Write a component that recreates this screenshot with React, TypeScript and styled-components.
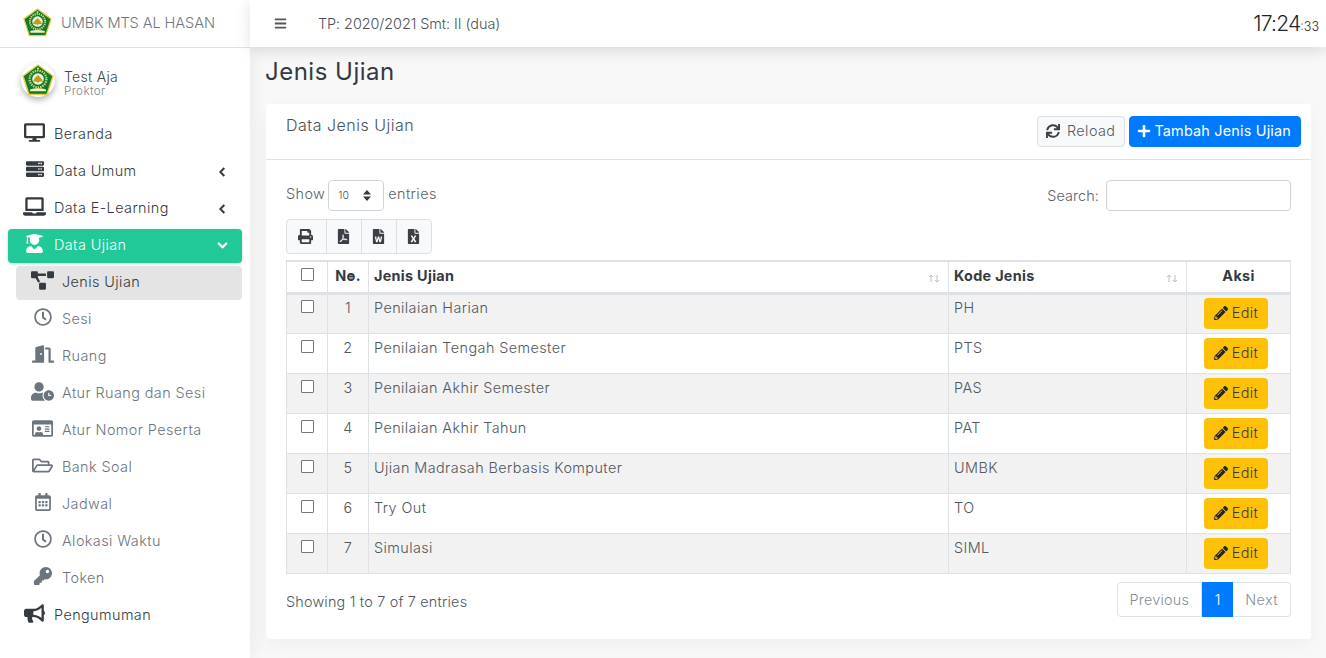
import styled, { createGlobalStyle } from "styled-components";
import type { ReactNode } from "react";
import {
  FaBars,
  FaBullhorn,
  FaChevronDown,
  FaChevronLeft,
  FaDesktop,
  FaDoorOpen,
  FaFilePdf,
  FaFileWord,
  FaFileExcel,
  FaKey,
  FaLaptop,
  FaPencilAlt,
  FaPlus,
  FaPrint,
  FaProjectDiagram,
  FaRegCalendarAlt,
  FaRegClock,
  FaRegFolderOpen,
  FaRegIdCard,
  FaServer,
  FaSync,
  FaUserClock,
  FaUserGraduate,
} from "react-icons/fa";

const GlobalStyle = createGlobalStyle`
  html, body {
    margin: 0;
    padding: 0;
    height: 100%;
    overflow: hidden;
    background: #f8f8f8;
    font-family: "Inter", "Liberation Sans", sans-serif;
    font-weight: 300;
    font-size: 14.4px;
    letter-spacing: 0.42px;
    color: #343a40;
  }
  * { box-sizing: border-box; }
`;

const Layout = styled.div`
  display: grid;
  grid-template-columns: 250px 1fr;
  height: 658px;
  overflow: hidden;
`;

const Sidebar = styled.aside`
  position: relative;
  background: #fff;
  height: 658px;
  display: flex;
  flex-direction: column;
  box-shadow: 4px 0 14px rgba(0, 0, 0, 0.05);
`;

const Brand = styled.div`
  height: 48px;
  border-bottom: 1px solid #dee2e6;
  display: flex;
  align-items: center;
  padding-left: 23px;
  gap: 9px;
  color: #6f777e;
  font-size: 14.6px;
  letter-spacing: -0.1px;
  padding-bottom: 2px;
`;

const UserPanel = styled.div`
  display: flex;
  align-items: center;
  gap: 9px;
  padding: 0 0 4px 21px;
  height: 68px;
`;

const Avatar = styled.div`
  width: 34px;
  height: 34px;
  border-radius: 50%;
  background: #fff;
  display: flex;
  align-items: center;
  justify-content: center;
  box-shadow: 0 3px 6px rgba(0, 0, 0, 0.3);
`;

const UserText = styled.div`
  margin-top: 6px;
`;

const UserName = styled.div`
  font-size: 14px;
  line-height: 17px;
  letter-spacing: 0.3px;
  color: #3f464c;
`;

const UserRole = styled.div`
  font-size: 11.6px;
  line-height: 13px;
  color: #7d858c;
`;

const Menu = styled.nav`
  display: flex;
  flex-direction: column;
  padding: 0 8px;
  margin-top: 2px;
`;

const MenuItem = styled.div<{ $active?: boolean; $current?: boolean; $sub?: boolean }>`
  height: 34px;
  margin-bottom: 3px;
  margin-left: ${(p) => (p.$sub ? "8px" : "0")};
  padding: 0 15px 4px;
  display: flex;
  align-items: center;
  border-radius: 4px;
  color: ${(p) => (p.$active ? "#fff" : p.$sub && !p.$current ? "#6c757d" : "#343a40")};
  background: ${(p) => (p.$active ? "#20c997" : p.$current ? "#e4e4e4" : "transparent")};
  box-shadow: ${(p) => (p.$active ? "0 1px 3px rgba(0,0,0,.2)" : "none")};
`;

const MenuIcon = styled.span`
  width: 23px;
  margin-right: 8px;
  display: flex;
  justify-content: center;
  margin-top: -2px;
`;

const MenuLabel = styled.span`
  flex: 1;
`;

const Caret = styled.span`
  display: flex;
  justify-content: center;
  width: 12px;
  margin-right: -1px;
  margin-top: 3px;
  svg {
    stroke: currentColor;
    stroke-width: 30px;
  }
`;

const Content = styled.div`
  min-width: 0;
  display: flex;
  flex-direction: column;
`;

const Topbar = styled.header`
  height: 47px;
  background: #fff;
  display: flex;
  align-items: center;
  padding: 0 7px 0 24px;
  box-shadow: 0 4px 14px rgba(0, 0, 0, 0.12);
  position: relative;
`;

const MenuToggle = styled.span`
  display: flex;
  font-size: 13px;
  color: #555;
  margin-right: 31px;
`;

const YearLabel = styled.span`
  flex: 1;
  font-size: 14.4px;
  letter-spacing: -0.05px;
  color: #4b5258;
`;

const Clock = styled.div`
  font-size: 21px;
  letter-spacing: -0.8px;
  color: #212529;
  small {
    font-size: 12.5px;
    letter-spacing: 0;
  }
`;

const Main = styled.main`
  padding: 8px 15px 0 15px;
`;

const PageTitle = styled.h1`
  margin: 0 0 16px;
  font-size: 24px;
  line-height: 33px;
  font-weight: 400;
  letter-spacing: 0.5px;
  color: #343a40;
`;

const Card = styled.section`
  background: #fff;
  margin-left: 1px;
  height: 535px;
  border-radius: 4px;
  box-shadow: 0 6px 20px rgba(0, 0, 0, 0.04);
`;

const CardHeader = styled.div`
  height: 56px;
  border-bottom: 1px solid #dee2e6;
  display: flex;
  justify-content: space-between;
  padding: 12px 10px 0 20px;
`;

const CardTitle = styled.div`
  font-size: 16px;
  letter-spacing: 0.5px;
  line-height: 19px;
  color: #4b5258;
`;

const HeaderActions = styled.div`
  display: flex;
  gap: 4px;
`;

const Button = styled.button<{ $primary?: boolean }>`
  height: 31px;
  border-radius: 4px;
  border: 1px solid ${(p) => (p.$primary ? "#007bff" : "#dcdfe3")};
  background: ${(p) => (p.$primary ? "#007bff" : "#f8f9fa")};
  color: ${(p) => (p.$primary ? "#fff" : "#555c63")};
  font: inherit;
  font-weight: ${(p) => (p.$primary ? 400 : 300)};
  letter-spacing: ${(p) => (p.$primary ? "0.2px" : "0.42px")};
  display: flex;
  align-items: center;
  padding: 0 9px 2px ${(p) => (p.$primary ? "7px" : "8px")};
  gap: ${(p) => (p.$primary ? "3px" : "7px")};
  svg {
    font-size: 14px;
    color: ${(p) => (p.$primary ? "#fff" : "#3a4046")};
  }
`;

const CardBody = styled.div`
  padding: 20px 20px 0 20px;
`;

const Controls = styled.div`
  display: flex;
  justify-content: space-between;
  align-items: flex-start;
`;

const LengthControl = styled.label`
  display: flex;
  align-items: center;
  gap: 4px;
  height: 27px;
  color: #5b6268;
`;

const SelectBox = styled.span`
  width: 56px;
  height: 31px;
  align-self: flex-start;
  margin-left: -1px;
  border: 1px solid #ced4da;
  border-radius: 4px;
  display: flex;
  align-items: center;
  justify-content: space-between;
  padding: 0 12px 0 9px;
  font-size: 10.5px;
  letter-spacing: 0;
  color: #495057;
`;

const SelectArrows = styled.svg`
  width: 8px;
  height: 11px;
  fill: #343a40;
`;

const SearchControl = styled.label`
  display: flex;
  align-items: center;
  gap: 7px;
  letter-spacing: 0.1px;
  color: #5b6268;
`;

const SearchInput = styled.input`
  width: 185px;
  height: 31px;
  border: 1px solid #ced4da;
  border-radius: 4px;
  background: #fff;
`;

const ExportGroup = styled.div`
  display: flex;
  margin: 12px 0 6px;
  height: 35px;
`;

const ExportButton = styled.button`
  width: 36px;
  height: 35px;
  margin-left: -1px;
  background: #f8f9fa;
  border: 1px solid #dcdfe3;
  color: #3a4046;
  font-size: 15px;
  display: flex;
  align-items: center;
  justify-content: center;
  padding: 0 2px 0 0;
  &:first-child {
    margin-left: 0;
    border-radius: 4px 0 0 4px;
    width: 41px;
  }
  &:last-child {
    border-radius: 0 4px 4px 0;
  }
`;

const Table = styled.table`
  width: 1004px;
  border-collapse: collapse;
  table-layout: fixed;
  tbody tr:first-child td {
    padding-top: 3px;
  }
`;

const HeadCell = styled.th<{ $center?: boolean }>`
  height: 32px;
  position: relative;
  border: 1px solid #dee2e6;
  border-top-width: 2px;
  border-bottom-width: 3px;
  padding: 0 5px 2px;
  font-weight: 700;
  font-size: 14.4px;
  letter-spacing: 0.3px;
  color: #343a40;
  text-align: ${(p) => (p.$center ? "center" : "left")};
`;

const Row = styled.tr<{ $odd?: boolean }>`
  background: ${(p) => (p.$odd ? "#f2f2f2" : "#fff")};
`;

const Cell = styled.td<{ $center?: boolean }>`
  height: 40px;
  border: 1px solid #dee2e6;
  padding: 4px 5px 0;
  vertical-align: top;
  line-height: 20px;
  color: #50575d;
  text-align: ${(p) => (p.$center ? "center" : "left")};
`;

const Check = styled.span`
  display: block;
  width: 13px;
  height: 13px;
  margin: 2px 0 0 9px;
  border: 1px solid #767676;
  border-radius: 1px;
  background: #fff;
`;

const CheckHead = styled(Check)`
  margin-top: -3px;
`;

const SortMark = styled.svg<{ $over?: boolean }>`
  position: absolute;
  right: ${(p) => (p.$over ? "11px" : "8px")};
  top: ${(p) => (p.$over ? "10px" : "12px")};
  width: 12px;
  height: 9px;
  stroke: ${(p) => (p.$over ? "#343a40" : "#b8bdc2")};
  stroke-width: 1;
  fill: none;
`;

const EditButton = styled.button`
  height: 31px;
  width: 64px;
  margin: 0 0 0 12px;
  border: none;
  border-radius: 4px;
  background: #ffc107;
  color: #343a40;
  font: inherit;
  letter-spacing: inherit;
  display: flex;
  align-items: center;
  justify-content: center;
  gap: 4px;
  padding: 0;
  svg {
    font-size: 14px;
    color: #212529;
  }
`;

const Footer = styled.div`
  display: flex;
  justify-content: space-between;
  margin-top: 8px;
  color: #50575d;
`;

const FooterInfo = styled.div`
  padding-top: 11px;
  letter-spacing: 0.2px;
`;

const Pagination = styled.div`
  display: flex;
  height: 35px;
`;

const PageLink = styled.span<{ $active?: boolean; $left?: boolean; $right?: boolean }>`
  display: flex;
  align-items: center;
  justify-content: center;
  padding: 0 12px;
  width: ${(p) => (p.$active ? "31px" : "auto")};
  letter-spacing: ${(p) => (p.$left ? "0.22px" : "0.42px")};
  color: ${(p) => (p.$active ? "#fff" : "#868e96")};
  background: ${(p) => (p.$active ? "#007bff" : "#fff")};
  border: 1px solid ${(p) => (p.$active ? "#007bff" : "#dee2e6")};
  border-left-width: ${(p) => (p.$left || p.$active ? "1px" : "0")};
  border-radius: ${(p) => (p.$left ? "4px 0 0 4px" : p.$right ? "0 4px 4px 0" : "0")};
`;

function Logo({ size }: { size: number }) {
  return (
    <svg width={size} height={size} viewBox="0 0 32 32">
      <path d="M16 1 31 12 25 30.500H7L1 12Z" fill="#12792b" stroke="#e6cf45" strokeWidth="1.4" strokeLinejoin="round" />
      <circle cx="16" cy="15" r="8.400" fill="none" stroke="#cfd98a" strokeWidth="2.200" strokeDasharray="1.400 1" />
      <circle cx="16" cy="15" r="5.800" fill="#eef2d6" />
      <path d="M10.800 18c1.500-4 3.400-5.500 5.200-6.800 1.800 1.300 3.700 2.800 5.200 6.800-1.900-.8-3.800-.6-5.200.8-1.400-1.400-3.300-1.600-5.200-.8Z" fill="#c39a1c" />
      <path d="M8 25.500c5-1.800 11-1.800 16 0v1.800H8Z" fill="#eef0c0" />
      <circle cx="16" cy="4.500" r="1.100" fill="#f0dc55" />
    </svg>
  );
}

function SortArrows({ over }: { over?: boolean }) {
  return (
    <SortMark $over={over} viewBox="0 0 12 9">
      <path d={over ? "M6 1v7M3.500 4.500h5" : "M3 8V1M1 3l2-2 2 2M9 1v7M7 6l2 2 2-2"} />
    </SortMark>
  );
}

interface NavEntry {
  label: string;
  icon: ReactNode;
  caret?: "left" | "down";
  active?: boolean;
  current?: boolean;
  sub?: boolean;
}

const navEntries: NavEntry[] = [
  { label: "Beranda", icon: <FaDesktop size={21} /> },
  { label: "Data Umum", icon: <FaServer size={18} />, caret: "left" },
  { label: "Data E-Learning", icon: <FaLaptop size={23} />, caret: "left" },
  { label: "Data Ujian", icon: <FaUserGraduate size={19} />, caret: "down", active: true },
  { label: "Jenis Ujian", icon: <FaProjectDiagram size={23} />, sub: true, current: true },
  { label: "Sesi", icon: <FaRegClock size={18} />, sub: true },
  { label: "Ruang", icon: <FaDoorOpen size={22} />, sub: true },
  { label: "Atur Ruang dan Sesi", icon: <FaUserClock size={23} />, sub: true },
  { label: "Atur Nomor Peserta", icon: <FaRegIdCard size={21} />, sub: true },
  { label: "Bank Soal", icon: <FaRegFolderOpen size={21} />, sub: true },
  { label: "Jadwal", icon: <FaRegCalendarAlt size={18} />, sub: true },
  { label: "Alokasi Waktu", icon: <FaRegClock size={18} />, sub: true },
  { label: "Token", icon: <FaKey size={18} />, sub: true },
  { label: "Pengumuman", icon: <FaBullhorn size={21} /> },
];

const rows = [
  ["Penilaian Harian", "PH"],
  ["Penilaian Tengah Semester", "PTS"],
  ["Penilaian Akhir Semester", "PAS"],
  ["Penilaian Akhir Tahun", "PAT"],
  ["Ujian Madrasah Berbasis Komputer", "UMBK"],
  ["Try Out", "TO"],
  ["Simulasi", "SIML"],
];

export default function App() {
  return (
    <>
      <GlobalStyle />
      <Layout>
        <Sidebar>
          <Brand>
            <Logo size={29} />
            UMBK MTS AL HASAN
          </Brand>
          <UserPanel>
            <Avatar>
              <Logo size={32} />
            </Avatar>
            <UserText>
              <UserName>Test Aja</UserName>
              <UserRole>Proktor</UserRole>
            </UserText>
          </UserPanel>
          <Menu>
            {navEntries.map((item) => (
              <MenuItem key={item.label} $active={item.active} $current={item.current} $sub={item.sub}>
                <MenuIcon>{item.icon}</MenuIcon>
                <MenuLabel>{item.label}</MenuLabel>
                {item.caret && (
                  <Caret>
                    {item.caret === "left" ? <FaChevronLeft size={10} /> : <FaChevronDown size={11} />}
                  </Caret>
                )}
              </MenuItem>
            ))}
          </Menu>
        </Sidebar>
        <Content>
          <Topbar>
            <MenuToggle>
              <FaBars />
            </MenuToggle>
            <YearLabel>TP: 2020/2021 Smt: II (dua)</YearLabel>
            <Clock>
              17:24<small>:33</small>
            </Clock>
          </Topbar>
          <Main>
            <PageTitle>Jenis Ujian</PageTitle>
            <Card>
              <CardHeader>
                <CardTitle>Data Jenis Ujian</CardTitle>
                <HeaderActions>
                  <Button>
                    <FaSync />
                    Reload
                  </Button>
                  <Button $primary>
                    <FaPlus />
                    Tambah Jenis Ujian
                  </Button>
                </HeaderActions>
              </CardHeader>
              <CardBody>
                <Controls>
                  <div>
                    <LengthControl>
                      Show
                      <SelectBox>
                        10
                        <SelectArrows viewBox="0 0 8 11">
                          <path d="M4 0 8 4.500H0ZM4 11 0 6.500H8Z" />
                        </SelectArrows>
                      </SelectBox>
                      entries
                    </LengthControl>
                    <ExportGroup>
                      <ExportButton>
                        <FaPrint />
                      </ExportButton>
                      <ExportButton>
                        <FaFilePdf />
                      </ExportButton>
                      <ExportButton>
                        <FaFileWord />
                      </ExportButton>
                      <ExportButton>
                        <FaFileExcel />
                      </ExportButton>
                    </ExportGroup>
                  </div>
                  <SearchControl>
                    Search:
                    <SearchInput />
                  </SearchControl>
                </Controls>
                <Table>
                  <colgroup>
                    <col width={41} />
                    <col width={41} />
                    <col width={580} />
                    <col width={238} />
                    <col width={104} />
                  </colgroup>
                  <thead>
                    <tr>
                      <HeadCell>
                        <CheckHead />
                      </HeadCell>
                      <HeadCell $center>
                        No.
                        <SortArrows over />
                      </HeadCell>
                      <HeadCell>
                        Jenis Ujian
                        <SortArrows />
                      </HeadCell>
                      <HeadCell>
                        Kode Jenis
                        <SortArrows />
                      </HeadCell>
                      <HeadCell $center>Aksi</HeadCell>
                    </tr>
                  </thead>
                  <tbody>
                    {rows.map(([name, code], i) => (
                      <Row key={code} $odd={i % 2 === 0}>
                        <Cell>
                          <Check />
                        </Cell>
                        <Cell $center>{i + 1}</Cell>
                        <Cell>{name}</Cell>
                        <Cell>{code}</Cell>
                        <Cell>
                          <EditButton>
                            <FaPencilAlt />
                            Edit
                          </EditButton>
                        </Cell>
                      </Row>
                    ))}
                  </tbody>
                </Table>
                <Footer>
                  <FooterInfo>Showing 1 to 7 of 7 entries</FooterInfo>
                  <Pagination>
                    <PageLink $left>Previous</PageLink>
                    <PageLink $active>1</PageLink>
                    <PageLink $right>Next</PageLink>
                  </Pagination>
                </Footer>
              </CardBody>
            </Card>
          </Main>
        </Content>
      </Layout>
    </>
  );
}
